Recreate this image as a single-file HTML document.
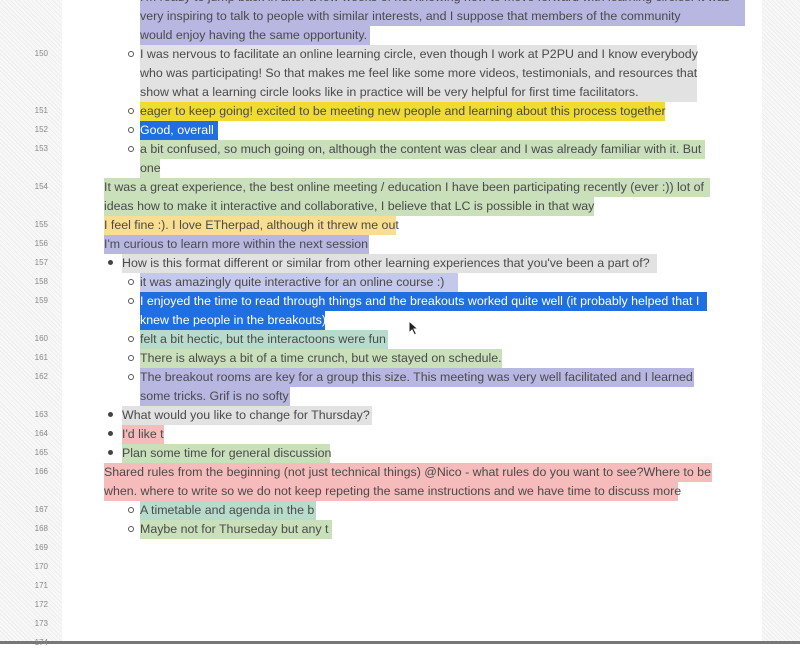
<!DOCTYPE html>
<html><head><meta charset="utf-8"><style>
body{margin:0;width:800px;height:644px;overflow:hidden;position:relative;background:#fff;font-family:"Liberation Sans",sans-serif}
.hat{position:absolute;top:0;height:644px;background:repeating-linear-gradient(45deg,#eeeeee 0 1px,#f8f8f8 1px 3px)}
.r{position:absolute;height:19px;line-height:19px;font-size:12.4px;color:#4a4a4a;white-space:nowrap}
.n{position:absolute;left:20px;width:28px;text-align:right;font-size:8px;color:#888;line-height:19px;height:19px}
.b{position:absolute;width:4px;height:4px;border:1px solid #555;border-radius:50%}
.d{position:absolute;width:5px;height:5px;background:#444;border-radius:50%}
.pu{background:#b7b7e2}.gr{background:#e2e2e2}.ye{background:#f0dc30}.bl{background:#1f6fe0;color:#fff}
.gn{background:#c9e0bb}.ly{background:#f8de90}.lp{background:#c4c8ea}.te{background:#b8dccb}.pk{background:#f6bcbc}
</style></head><body>
<div class="hat" style="left:0;width:62px"></div>
<div class="hat" style="left:762px;width:38px"></div>
<div style="position:absolute;left:0;top:641px;width:800px;height:3px;background:#777"></div>

<div class="r pu" style="top:-12px;left:140px;width:605px">I'm ready to jump back in after a few weeks of not knowing how to move forward with learning circles. It was</div>
<div class="r pu" style="top:7px;left:140px;width:605px">very inspiring to talk to people with similar interests, and I suppose that members of the community</div>
<div class="r pu" style="top:26px;left:140px;width:230px">would enjoy having the same opportunity.</div>
<div class="r gr" style="top:45px;left:140px;width:557px">I was nervous to facilitate an online learning circle, even though I work at P2PU and I know everybody</div>
<div class="r gr" style="top:64px;left:140px;width:557px">who was participating! So that makes me feel like some more videos, testimonials, and resources that</div>
<div class="r gr" style="top:83px;left:140px;width:557px">show what a learning circle looks like in practice will be very helpful for first time facilitators.</div>
<div class="r ye" style="top:102px;left:140px;width:525px">eager to keep going! excited to be meeting new people and learning about this process together</div>
<div class="r bl" style="top:121px;left:140px;width:78px">Good, overall i</div>
<div class="r gn" style="top:140px;left:140px;width:565px">a bit confused, so much going on, although the content was clear and I was already familiar with it. But</div>
<div class="r gn" style="top:159px;left:140px;width:20px">one</div>
<div class="r gn" style="top:178px;left:104px;width:606px">It was a great experience, the best online meeting / education I have been participating recently (ever :)) lot of</div>
<div class="r gn" style="top:197px;left:104px;width:490px">ideas how to make it interactive and collaborative, I believe that LC is possible in that way</div>
<div class="r ly" style="top:216px;left:104px;width:292px">I feel fine :). I love ETherpad, although it threw me out</div>
<div class="r pu" style="top:235px;left:104px;width:265px">I'm curious to learn more within the next session</div>
<div class="r gr" style="top:254px;left:122px;width:535px">How is this format different or similar from other learning experiences that you've been a part of?</div>
<div class="r lp" style="top:273px;left:140px;width:318px">it was amazingly quite interactive for an online course :)</div>
<div class="r bl" style="top:292px;left:140px;width:567px">I enjoyed the time to read through things and the breakouts worked quite well (it probably helped that I</div>
<div class="r bl" style="top:311px;left:140px;width:185px">knew the people in the breakouts)</div>
<div class="r te" style="top:330px;left:140px;width:248px">felt a bit hectic, but the interactoons were fun</div>
<div class="r gn" style="top:349px;left:140px;width:362px">There is always a bit of a time crunch, but we stayed on schedule.</div>
<div class="r pu" style="top:368px;left:140px;width:554px">The breakout rooms are key for a group this size. This meeting was very well facilitated and I learned</div>
<div class="r pu" style="top:387px;left:140px;width:150px">some tricks. Grif is no softy</div>
<div class="r gr" style="top:406px;left:122px;width:250px">What would you like to change for Thursday?</div>
<div class="r pk" style="top:425px;left:122px;width:42px">I'd like t</div>
<div class="r gn" style="top:444px;left:122px;width:208px">Plan some time for general discussion</div>
<div class="r pk" style="top:463px;left:104px;width:608px">Shared rules from the beginning (not just technical things) @Nico - what rules do you want to see?Where to be</div>
<div class="r pk" style="top:482px;left:104px;width:574px">when. where to write so we do not keep repeting the same instructions and we have time to discuss more</div>
<div class="r te" style="top:501px;left:140px;width:176px">A timetable and agenda in the b</div>
<div class="r gn" style="top:520px;left:140px;width:192px">Maybe not for Thurseday but any t</div>

<div class="b" style="left:128px;top:51px"></div>
<div class="b" style="left:128px;top:108px"></div>
<div class="b" style="left:128px;top:127px"></div>
<div class="b" style="left:128px;top:146px"></div>
<div class="d" style="left:108px;top:260px"></div>
<div class="b" style="left:128px;top:279px"></div>
<div class="b" style="left:128px;top:298px"></div>
<div class="b" style="left:128px;top:336px"></div>
<div class="b" style="left:128px;top:355px"></div>
<div class="b" style="left:128px;top:374px"></div>
<div class="d" style="left:108px;top:412px"></div>
<div class="d" style="left:108px;top:431px"></div>
<div class="d" style="left:108px;top:450px"></div>
<div class="b" style="left:128px;top:507px"></div>
<div class="b" style="left:128px;top:526px"></div>

<div class="n" style="top:44px">150</div>
<div class="n" style="top:101px">151</div>
<div class="n" style="top:120px">152</div>
<div class="n" style="top:139px">153</div>
<div class="n" style="top:177px">154</div>
<div class="n" style="top:215px">155</div>
<div class="n" style="top:234px">156</div>
<div class="n" style="top:253px">157</div>
<div class="n" style="top:272px">158</div>
<div class="n" style="top:291px">159</div>
<div class="n" style="top:329px">160</div>
<div class="n" style="top:348px">161</div>
<div class="n" style="top:367px">162</div>
<div class="n" style="top:405px">163</div>
<div class="n" style="top:424px">164</div>
<div class="n" style="top:443px">165</div>
<div class="n" style="top:462px">166</div>
<div class="n" style="top:500px">167</div>
<div class="n" style="top:519px">168</div>
<div class="n" style="top:538px">169</div>
<div class="n" style="top:557px">170</div>
<div class="n" style="top:576px">171</div>
<div class="n" style="top:595px">172</div>
<div class="n" style="top:614px">173</div>
<div class="n" style="top:633px">174</div>

<svg style="position:absolute;left:408px;top:320px" width="12" height="16" viewBox="0 0 12 16"><path d="M1 1 L1 13 L4 10 L6.5 15 L8.5 14 L6 9 L10 9 Z" fill="#222" stroke="#fff" stroke-width="1"/></svg>
</body></html>
